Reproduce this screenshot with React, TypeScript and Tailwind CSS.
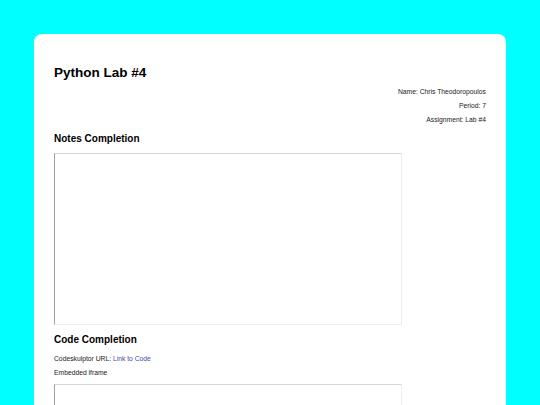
const Frame = () => (
  <div className="w-[348px] h-[172px] border-[1.5px] border-t-[#d6d6d6] border-l-[#a0a0a0] border-r-[#efefef] border-b-[#efefef] bg-white" />
);

export default function App() {
  return (
    <div className="min-h-screen bg-[#00ffff] px-[34px] pt-[34px] font-['Liberation_Sans',Arial,sans-serif] text-black">
      <div className="bg-white rounded-[8px] px-[20px] pt-[31px] pb-[40px]">
        <h1 className="text-[13.5px] leading-[16px] font-bold">Python Lab #4</h1>

        <div className="mt-[6.8px] flex flex-col items-end gap-[6.2px] text-[6.75px] leading-[8px] text-[#222]">
          <p>Name: Chris Theodoropoulos</p>
          <p>Period: 7</p>
          <p>Assignment: Lab #4</p>
        </div>

        <h2 className="mt-[9.2px] text-[10px] leading-[12px] font-bold">Notes Completion</h2>
        <div className="mt-[7.5px]">
          <Frame />
        </div>

        <h2 className="mt-[9.3px] text-[10px] leading-[12px] font-bold">Code Completion</h2>
        <p className="mt-[8.4px] text-[6.75px] leading-[8px] text-[#222]">
          Codeskulptor URL:{" "}
          <a href="#" className="text-[#4848a8]">
            Link to Code
          </a>
        </p>
        <p className="mt-[6.1px] text-[6.75px] leading-[8px] text-[#222]">Embedded iframe</p>
        <div className="mt-[7.5px]">
          <Frame />
        </div>
      </div>
    </div>
  );
}
